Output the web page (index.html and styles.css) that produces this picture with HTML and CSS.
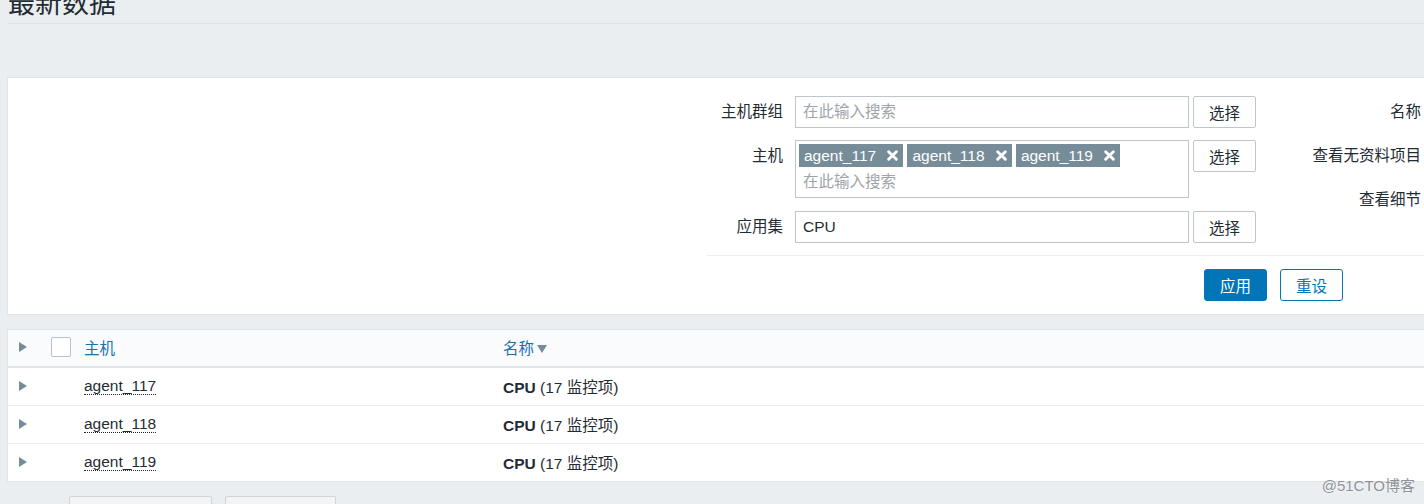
FILE: index.html
```html
<!DOCTYPE html>
<html>
<head>
<meta charset="utf-8">
<title>最新数据</title>
<link rel="stylesheet" href="styles.css">
</head>
<body>

<div class="page">
  <div class="header">
    <h1>最新数据</h1>
  </div>

  <div class="filter">
    <div class="filter-panel">
      <div class="filter-cols">
        <div class="form-col">
          <div class="form-row">
            <label>主机群组</label>
            <input type="text" class="field" placeholder="在此输入搜索">
            <button class="btn-alt">选择</button>
          </div>
          <div class="form-row">
            <label>主机</label>
            <div class="multiselect">
              <div class="tags">
                <span class="tag">agent_117 <svg class="tag-x" viewBox="0 0 10 10"><path d="M1.5 1.5 L8.5 8.5 M8.5 1.5 L1.5 8.5"/></svg></span>
                <span class="tag">agent_118 <svg class="tag-x" viewBox="0 0 10 10"><path d="M1.5 1.5 L8.5 8.5 M8.5 1.5 L1.5 8.5"/></svg></span>
                <span class="tag">agent_119 <svg class="tag-x" viewBox="0 0 10 10"><path d="M1.5 1.5 L8.5 8.5 M8.5 1.5 L1.5 8.5"/></svg></span>
              </div>
              <input type="text" class="ms-input" placeholder="在此输入搜索">
            </div>
            <button class="btn-alt">选择</button>
          </div>
          <div class="form-row">
            <label>应用集</label>
            <input type="text" class="field" value="CPU">
            <button class="btn-alt">选择</button>
          </div>
        </div>
        <div class="side-col">
          <div class="side-row">名称</div>
          <div class="side-row">查看无资料项目</div>
          <div class="side-row">查看细节</div>
        </div>
      </div>
      <div class="filter-actions">
        <button class="btn-apply">应用</button>
        <button class="btn-reset">重设</button>
      </div>
    </div>
  </div>

  <table class="list">
    <thead>
      <tr>
        <th class="col-arrow"><span class="arrow"></span></th>
        <th class="col-check"><span class="checkbox"></span></th>
        <th class="col-host"><a>主机</a></th>
        <th><a>名称</a><span class="sort-down"></span></th>
      </tr>
    </thead>
    <tbody>
      <tr>
        <td class="col-arrow"><span class="arrow"></span></td>
        <td class="col-check"></td>
        <td class="col-host"><span class="host">agent_117</span></td>
        <td><b>CPU</b> (17 监控项)</td>
      </tr>
      <tr>
        <td class="col-arrow"><span class="arrow"></span></td>
        <td class="col-check"></td>
        <td class="col-host"><span class="host">agent_118</span></td>
        <td><b>CPU</b> (17 监控项)</td>
      </tr>
      <tr>
        <td class="col-arrow"><span class="arrow"></span></td>
        <td class="col-check"></td>
        <td class="col-host"><span class="host">agent_119</span></td>
        <td><b>CPU</b> (17 监控项)</td>
      </tr>
    </tbody>
  </table>

  <div class="table-actions">
    <button class="btn-gray wide"></button>
    <button class="btn-gray"></button>
  </div>
</div>

<div class="watermark">@51CTO博客</div>

</body>
</html>
```

FILE: styles.css
```css
html, body {
  margin: 0;
  height: 100%;
  overflow: hidden;
}

body {
  background-color: #ebeef1;
  font-family: "Liberation Sans", Arial, "Noto Sans CJK SC", sans-serif;
  font-size: 15.5px;
  color: #1f2c33;
  position: relative;
}

.page {
  padding-left: 7px;
}

.header {
  display: flow-root;
  height: 23px;
  margin-left: 1px;
  border-bottom: 1px solid #dde2e6;
}

.header h1 {
  margin: 0;
  margin-top: -14px;
  font-size: 27px;
  line-height: 36px;
  font-weight: normal;
  color: #1f2c33;
}

/* фильтр */
.filter {
  margin-top: 53px;
  background-color: #fff;
  border: 1px solid #dfe4e7;
  border-right: none;
  height: 238px;
  box-sizing: border-box;
}

.filter-panel {
  width: 717px;
  margin-left: auto;
}

.filter-cols {
  display: flex;
  padding-top: 18px;
}

.form-col {
  width: 549px;
}

.form-row {
  display: flex;
  align-items: flex-start;
  margin-bottom: 12px;
}

.form-row:nth-child(2) {
  margin-bottom: 13px;
}

.form-row:last-child {
  margin-bottom: 0;
}

.form-row label {
  width: 76px;
  margin-right: 12px;
  text-align: right;
  line-height: 32px;
}

.field {
  width: 394px;
  height: 32px;
  box-sizing: border-box;
  border: 1px solid #bfc6cb;
  padding: 0 7px;
  font: inherit;
  color: #1f2c33;
  outline: none;
}

.field::placeholder,
.ms-input::placeholder {
  color: #9ea4a9;
}

.btn-alt {
  width: 63px;
  height: 32px;
  margin-left: 4px;
  border: 1px solid #bfc6cb;
  border-radius: 2px;
  background-color: #fff;
  font: inherit;
  color: #1f2c33;
  padding: 0;
}

.multiselect {
  width: 394px;
  height: 58px;
  box-sizing: border-box;
  border: 1px solid #bfc6cb;
  padding: 3px 3px 0 3px;
}

.tags {
  display: flex;
  gap: 4px;
  height: 23px;
}

.tag {
  display: inline-flex;
  align-items: center;
  height: 23px;
  padding: 0 5px 0 5px;
  background-color: #768d99;
  color: #fff;
  white-space: pre;
}

.tag-x {
  width: 11px;
  height: 11px;
  margin-left: 7px;
  fill: none;
  stroke: #fff;
  stroke-width: 2.6;
  stroke-linecap: round;
}

.ms-input {
  display: block;
  width: 100%;
  height: 29px;
  box-sizing: border-box;
  border: none;
  padding: 0 4px;
  font: inherit;
  outline: none;
}

.side-col {
  width: 165px;
  padding-right: 3px;
  text-align: right;
}

.side-row {
  line-height: 32px;
  margin-bottom: 12px;
}

.filter-actions {
  margin-top: 12px;
  border-top: 1px solid #ebeef1;
  padding: 13px 81px 0 0;
  display: flex;
  justify-content: flex-end;
  gap: 13px;
}

.btn-apply,
.btn-reset {
  width: 63px;
  height: 32px;
  border-radius: 3px;
  font: inherit;
  padding: 0;
}

.btn-apply {
  background-color: #0275b8;
  border: 1px solid #0275b8;
  color: #fff;
}

.btn-reset {
  background-color: #fff;
  border: 1px solid #0275b8;
  color: #0275b8;
}

/* таблица */
.list {
  margin-top: 14px;
  width: 100%;
  border-collapse: collapse;
  table-layout: fixed;
  background-color: #fff;
  border: 1px solid #dfe4e7;
  border-right: none;
}

.list th,
.list td {
  padding: 0 7px;
  text-align: left;
  vertical-align: middle;
  white-space: nowrap;
}

.list th {
  height: 34px;
  padding-bottom: 2px;
  font-weight: normal;
  background-color: #f9fbfc;
  border-bottom: 2px solid #dfe4e7;
}

.list th a {
  color: #1b72a8;
}

.list td {
  height: 36px;
  padding-bottom: 1px;
  border-bottom: 1px solid #ebeef1;
}

.list tr:last-child td {
  border-bottom: 1px solid #dfe4e7;
}

.list .col-arrow {
  width: 25px;
  padding-left: 11px;
  padding-right: 0;
}

.list .col-check {
  width: 19px;
}

.list .col-host {
  width: 405px;
}

.arrow {
  display: block;
  width: 0;
  height: 0;
  border-top: 5px solid transparent;
  border-bottom: 5px solid transparent;
  border-left: 8px solid #768d99;
}

.checkbox {
  display: block;
  width: 20px;
  height: 20px;
  box-sizing: border-box;
  border: 1px solid #b7c1c7;
  border-radius: 2px;
  background-color: #fff;
}

.sort-down {
  display: inline-block;
  width: 0;
  height: 0;
  margin-left: 3px;
  vertical-align: 1px;
  border-left: 5px solid transparent;
  border-right: 5px solid transparent;
  border-top: 8px solid #768d99;
}

.host {
  border-bottom: 1px dotted #1f2c33;
}

.table-actions {
  margin-top: 14px;
  padding-left: 62px;
  display: flex;
  gap: 13px;
}

.btn-gray {
  width: 111px;
  height: 32px;
  border: 1px solid #cfd5d9;
  border-radius: 2px;
  background-color: #f2f4f6;
}

.btn-gray.wide {
  width: 143px;
}

.watermark {
  position: absolute;
  right: 9px;
  bottom: 9px;
  font-size: 15px;
  color: #8e9398;
  text-shadow: 0 0 2px #fff;
}
```
